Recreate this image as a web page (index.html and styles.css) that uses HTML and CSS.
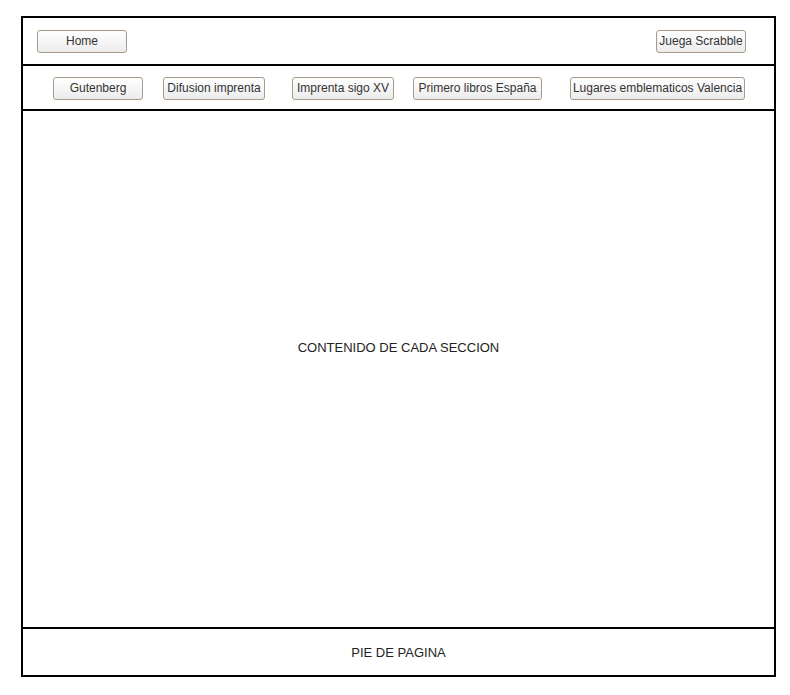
FILE: index.html
```html
<!DOCTYPE html>
<html lang="es">
<head>
<meta charset="utf-8">
<title>Imprenta</title>
<link rel="stylesheet" href="styles.css">
</head>
<body>
<div class="frame">
  <header class="top">
    <button class="btn btn-home">Home</button>
    <button class="btn btn-game">Juega Scrabble</button>
  </header>
  <nav class="menu">
    <button class="btn b1">Gutenberg</button>
    <button class="btn b2">Difusion imprenta</button>
    <button class="btn b3">Imprenta sigo XV</button>
    <button class="btn b4">Primero libros España</button>
    <button class="btn b5">Lugares emblematicos Valencia</button>
  </nav>
  <main class="content">CONTENIDO DE CADA SECCION</main>
  <footer class="foot">PIE DE PAGINA</footer>
</div>
</body>
</html>
```

FILE: styles.css
```css
html, body {
  margin: 0;
  padding: 0;
  background: #fff;
}
body {
  font-family: "Liberation Sans", Arial, sans-serif;
  color: #222;
}
.frame {
  box-sizing: border-box;
  width: 755px;
  height: 661px;
  margin: 16px 0 0 21px;
  border: 2px solid #000;
  display: flex;
  flex-direction: column;
}
.top {
  height: 48px;
  box-sizing: border-box;
  border-bottom: 2px solid #000;
  display: flex;
  align-items: center;
  justify-content: space-between;
  padding: 0 28px 0 14px;
}
.menu {
  height: 45px;
  box-sizing: border-box;
  border-bottom: 2px solid #000;
  display: flex;
  align-items: center;
  padding: 1px 0 0 30px;
}
.btn {
  box-sizing: border-box;
  height: 23px;
  padding: 0 2px;
  font-family: "Liberation Sans", Arial, sans-serif;
  font-size: 12px;
  color: #333;
  border: 1px solid #a89a88;
  border-radius: 3px;
  background: linear-gradient(#ffffff, #ececec);
  white-space: nowrap;
  text-align: center;
  margin: 0;
}
.btn-home { width: 90px; }
.btn-game { width: 90px; padding: 0; }
.b1 { width: 90px; }
.b2 { width: 102px; margin-left: 20px; }
.b3 { width: 102px; margin-left: 27px; }
.b4 { width: 129px; margin-left: 19px; }
.b5 { width: 175px; margin-left: 28px; padding: 0; }
.content {
  height: 516px;
  box-sizing: border-box;
  display: flex;
  justify-content: center;
  align-items: flex-start;
  padding-top: 229px;
  font-size: 13px;
  color: #222;
}
.foot {
  height: 48px;
  box-sizing: border-box;
  border-top: 2px solid #000;
  display: flex;
  justify-content: center;
  align-items: center;
  font-size: 13px;
  color: #222;
}
```
